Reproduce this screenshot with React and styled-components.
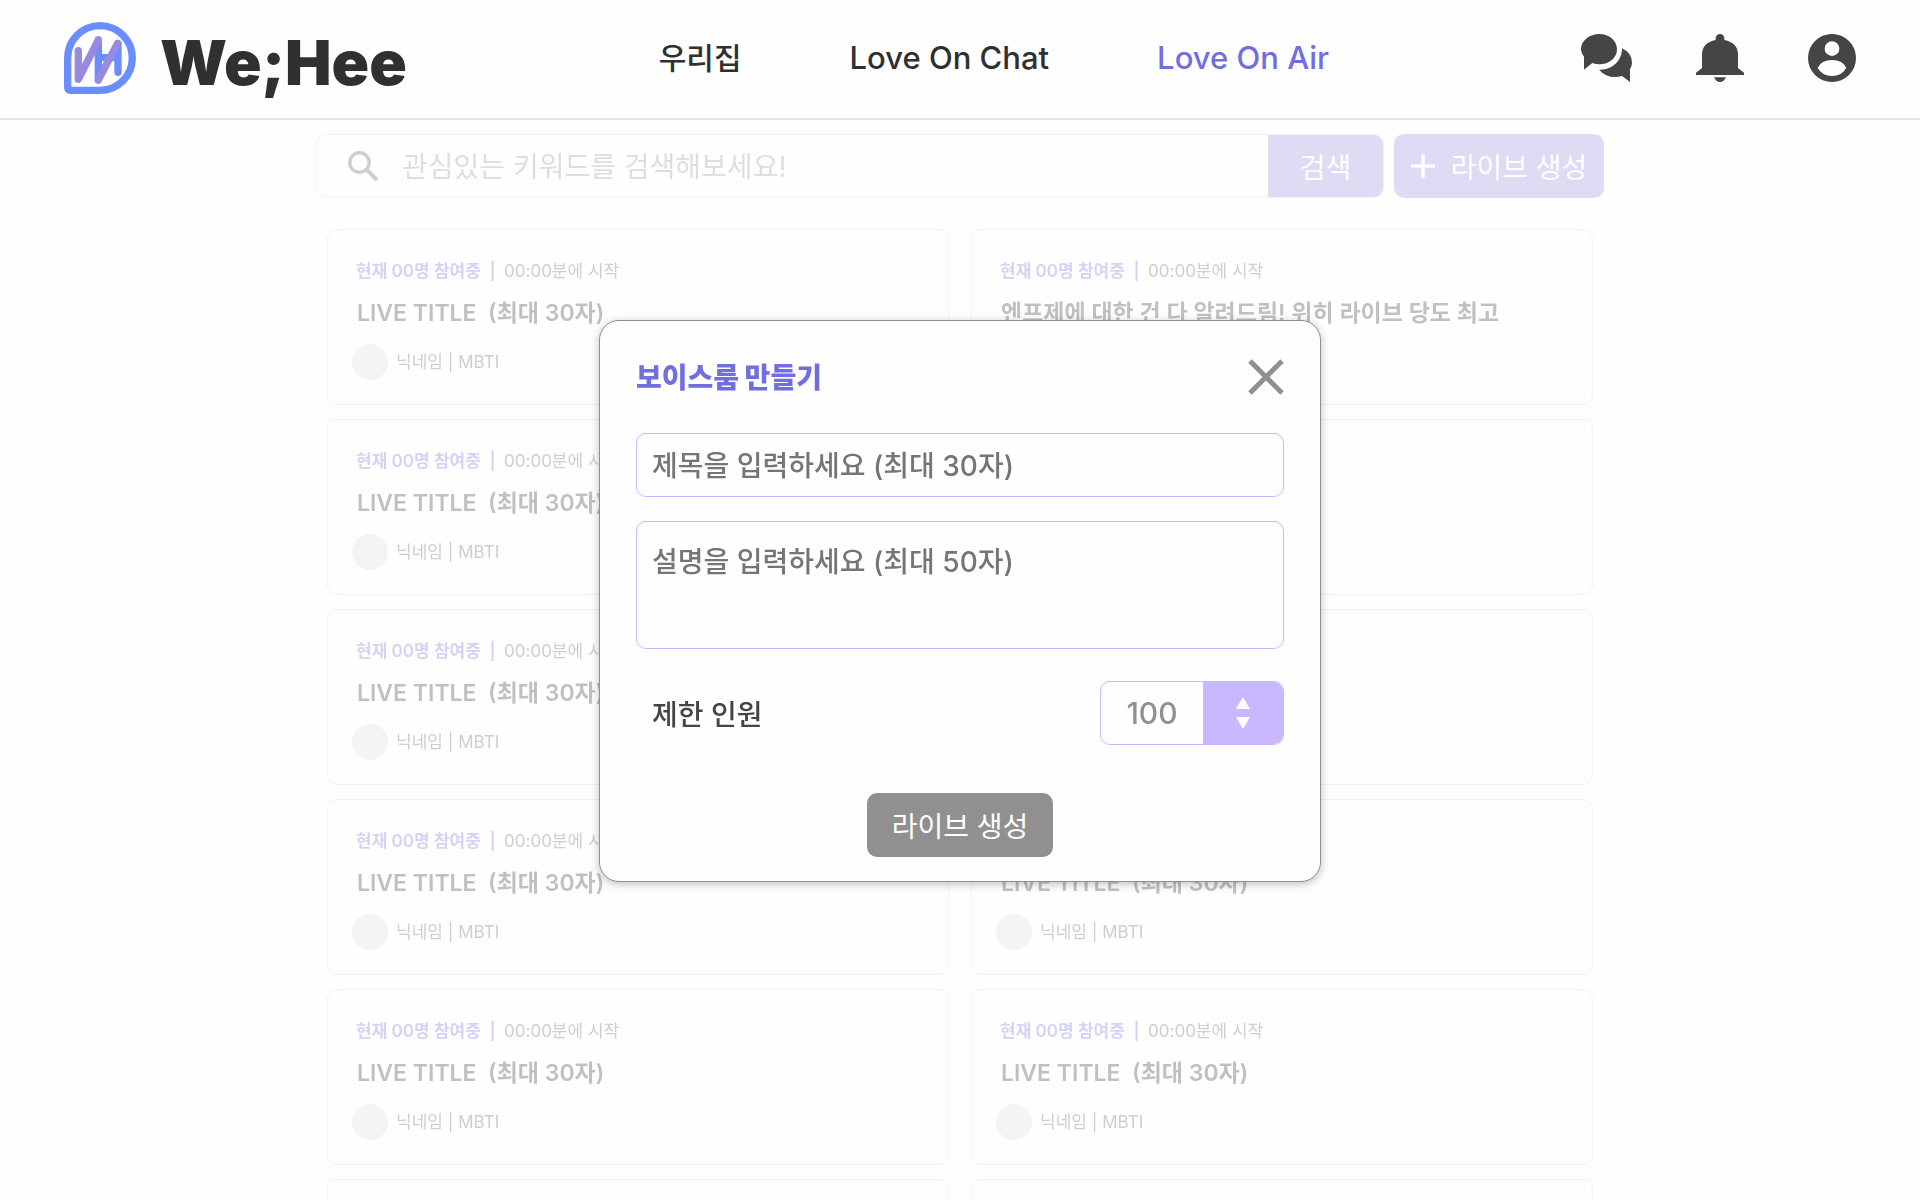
import React, { useState } from "react";
import styled, { createGlobalStyle, css } from "styled-components";

const color = {
  bg: "#fefefe",
  ink: "#303030",
  icon: "#454545",
  grey: "#909090",
  purple: "#716fdf",
  lilac: "#c9b8ff",
  violet: "#998ae0",
  line: "#e5e5e5",
};

const GlobalStyle = createGlobalStyle`
  *, *::before, *::after { box-sizing: border-box; }
  body {
    margin: 0;
    height: 100vh;
    overflow: hidden;
    background: ${color.bg};
    color: ${color.ink};
    font-family: Inter, "Noto Sans CJK KR", sans-serif;
  }
  button, input, textarea { font: inherit; color: inherit; margin: 0; }
  button { border: 0; padding: 0; background: none; cursor: pointer; }
  h1, h2, h3, p { margin: 0; }
`;

const Header = styled.header`
  display: flex;
  align-items: center;
  justify-content: space-between;
  height: 120px;
  padding: 0 64px 2px;
  border-bottom: 2px solid ${color.line};
`;

const Brand = styled.a`
  display: flex;
  align-items: center;
  gap: 24px;
  color: ${color.ink};
  font-size: 62px;
  font-weight: 900;
  line-height: 72px;
  text-decoration: none;
`;

const BrandName = styled.span`
  padding-top: 10px;
`;

const Nav = styled.nav`
  display: flex;
  gap: 108px;
`;

const NavLink = styled.a`
  color: ${(p) => (p.$active ? color.purple : color.ink)};
  font-size: 30px;
  font-weight: 500;
  line-height: 40px;
  text-decoration: none;
  &:lang(en) { font-size: 31px; }
`;

const Tools = styled.div`
  display: flex;
  gap: 64px;
`;

const IconButton = styled.button`
  display: flex;
  color: ${color.icon};
`;

const Main = styled.main`
  max-width: 1288px;
  margin: 0 auto;
  padding-top: 14px;
  opacity: 0.3;
`;

const SearchRow = styled.div`
  display: flex;
  gap: 10px;
  height: 64px;
  margin-bottom: 31px;
  font-size: 28px;
`;

const SearchForm = styled.form`
  display: flex;
  flex: 1;
  align-items: center;
  overflow: hidden;
  border: 1px solid #d5d5ea;
  border-radius: 10px;
`;

const SearchLabel = styled.label`
  display: flex;
  flex: 1;
  align-items: center;
  gap: 23px;
  padding-left: 30px;
  color: #606060;
`;

const SearchInput = styled.input`
  flex: 1;
  min-width: 0;
  padding: 2px 0 0;
  border: 0;
  outline: 0;
  background: none;
  &::placeholder { color: #959595; opacity: 1; }
`;

const SearchButton = styled.button`
  align-self: stretch;
  width: 115px;
  background: ${color.violet};
  color: #fff;
`;

const LiveButton = styled.button`
  display: flex;
  align-items: center;
  justify-content: center;
  gap: 16px;
  width: 210px;
  border-radius: 10px;
  background: ${color.violet};
  color: #fff;
`;

const Grid = styled.ul`
  display: grid;
  grid-template-columns: 1fr 1fr;
  gap: 14px 22px;
  margin: 0;
  padding: 0 11px;
  list-style: none;
`;

const Card = styled.li`
  display: flex;
  flex-direction: column;
  height: 176px;
  padding: 28px 24px;
  border: 1px solid #d5d5ea;
  border-radius: 10px;
`;

const Meta = styled.p`
  padding-left: 4px;
  color: #606060;
  font-size: 17px;
  line-height: 26px;
  white-space: pre;
`;

const Count = styled.span`
  color: ${color.purple};
  font-weight: 600;
`;

const CardTitle = styled.h3`
  margin: 13px 0 15px;
  padding-left: 5px;
  font-size: 23px;
  font-weight: 600;
  line-height: 32px;
  white-space: pre;
`;

const Host = styled.div`
  display: flex;
  align-items: center;
  gap: 8px;
  color: #606060;
  font-size: 17px;
  line-height: 26px;
`;

const Avatar = styled.span`
  width: 36px;
  height: 36px;
  border-radius: 50%;
  background: #dddddd;
`;

const Overlay = styled.div`
  position: fixed;
  inset: 0;
  display: flex;
  align-items: flex-start;
  justify-content: center;
  padding-top: 320px;
`;

const Dialog = styled.form`
  display: flex;
  flex-direction: column;
  width: 722px;
  max-width: 100%;
  padding: 38px 36px 24px;
  border: 1px solid ${color.grey};
  border-radius: 20px;
  background: ${color.bg};
  box-shadow: 0 2px 8px rgba(0, 0, 0, 0.25);
  font-size: 28px;
  font-weight: 500;
`;

const DialogHead = styled.div`
  display: flex;
  align-items: center;
  justify-content: space-between;
  height: 36px;
  margin-bottom: 38px;
`;

const DialogTitle = styled.h2`
  padding-top: 2px;
  color: ${color.purple};
  font-size: 28px;
  font-weight: 900;
  line-height: 36px;
`;

const CloseButton = styled.button`
  display: flex;
  color: ${color.grey};
`;

const field = css`
  width: 100%;
  border: 1px solid ${color.lilac};
  border-radius: 10px;
  outline: 0;
  background: none;
  &::placeholder { color: #757575; opacity: 1; }
`;

const TitleInput = styled.input`
  ${field}
  height: 64px;
  margin-bottom: 24px;
  padding: 2px 15px 0;
`;

const DescInput = styled.textarea`
  ${field}
  height: 128px;
  padding: 20px 15px;
  line-height: 40px;
  resize: none;
`;

const LimitRow = styled.div`
  display: flex;
  align-items: center;
  justify-content: space-between;
  margin: 32px 0 48px;
  padding-left: 16px;
  color: ${color.icon};
`;

const Stepper = styled.div`
  display: flex;
  width: 184px;
  height: 64px;
  overflow: hidden;
  border: 1px solid ${color.lilac};
  border-radius: 10px;
`;

const LimitInput = styled.input`
  flex: 1;
  min-width: 0;
  padding: 0;
  border: 0;
  outline: 0;
  background: none;
  color: ${color.grey};
  font-size: 30px;
  text-align: center;
  appearance: textfield;
  &::-webkit-inner-spin-button { appearance: none; margin: 0; }
`;

const StepButtons = styled.div`
  display: flex;
  flex-direction: column;
  align-items: center;
  justify-content: center;
  gap: 8px;
  width: 80px;
  background: ${color.lilac};
`;

const StepButton = styled.button`
  display: flex;
  color: #fff;
`;

const SubmitButton = styled.button`
  align-self: center;
  width: 186px;
  height: 64px;
  border-radius: 10px;
  background: ${color.grey};
  color: #fff;
  font-weight: 400;
`;

const Logo = () => (
  <svg width="72" height="72" viewBox="0 0 216 216" fill="none" aria-hidden="true">
    <path
      d="M108 11A97 97 0 0 1 108 205H20Q11 205 11 196V108A97 97 0 0 1 108 11Z"
      stroke="#6b8dff"
      strokeWidth="22"
    />
    <g strokeWidth="22" strokeLinecap="round">
      <path d="M103 54V174M162 66V151M103 107H162" stroke="#6b8dff" />
      <path d="M43 86V172L103 54M103 174L161 64" stroke="#998ae0" strokeLinejoin="round" />
    </g>
  </svg>
);

const ChatIcon = () => (
  <svg width="51" height="48" viewBox="0 0 153 144" fill="currentColor" aria-hidden="true">
    <path d="M55 0C85 0 108 20 108 46S85 91 55 91Q44 91 34 87L9 107V68Q0 58 0 46C0 20 25 0 55 0Z" />
    <path d="M123 43Q153 57 153 86Q153 97 147 106V144L123 126Q82 138 54 107C94 109 123 80 123 43Z" />
  </svg>
);

const BellIcon = () => (
  <svg width="48" height="48" viewBox="0 0 144 144" fill="currentColor" aria-hidden="true">
    <path d="M59 13a13 13 0 0 1 26 0v5Q126 26 126 62V102L144 116V123H0V116L18 102V62Q18 26 59 18Z" />
    <path d="M54 130H90Q84 144 72 144T54 130Z" />
  </svg>
);

const UserIcon = () => (
  <svg width="48" height="48" viewBox="0 0 144 144" aria-hidden="true">
    <circle cx="72" cy="72" r="72" fill="currentColor" />
    <circle cx="72" cy="44" r="22" fill={color.bg} />
    <path d="M29 101Q40 78 72 78T115 101Q102 126 72 126T29 101Z" fill={color.bg} />
  </svg>
);

const SearchIcon = () => (
  <svg width="32" height="32" viewBox="0 0 32 32" fill="none" stroke="currentColor" aria-hidden="true">
    <circle cx="12.5" cy="12.5" r="9.7" strokeWidth="3.4" />
    <path d="M19.5 19.5L30 30" strokeWidth="4" />
  </svg>
);

const PlusIcon = () => (
  <svg width="24" height="24" viewBox="0 0 24 24" stroke="currentColor" strokeWidth="3.4" aria-hidden="true">
    <path d="M12 0V24M0 12H24" />
  </svg>
);

const CloseIcon = () => (
  <svg width="36" height="36" viewBox="0 0 36 36" stroke="currentColor" strokeWidth="5" aria-hidden="true">
    <path d="M2 2L34 34M34 2L2 34" />
  </svg>
);

const Triangle = ({ down }) => (
  <svg width="14" height="12" viewBox="0 0 14 12" fill="currentColor" aria-hidden="true">
    <path d={down ? "M0 0H14L7 12Z" : "M7 0L14 12H0Z"} />
  </svg>
);

const plain = "LIVE TITLE  (최대 30자)";
const rooms = Array.from({ length: 12 }, (_, i) => ({
  id: i,
  title: i === 1 ? "엔프제에 대한 건 다 알려드림! 위히 라이브 당도 최고" : plain,
}));

const RoomCard = ({ title }) => (
  <Card>
    <Meta>
      <Count>{"현재 00명 참여중  |  "}</Count>00:00분에 시작
    </Meta>
    <CardTitle>{title}</CardTitle>
    <Host>
      <Avatar />
      <span>닉네임 | MBTI</span>
    </Host>
  </Card>
);

function CreateRoomDialog({ onClose }) {
  const [limit, setLimit] = useState(100);
  return (
    <Overlay>
      <Dialog role="dialog" aria-labelledby="room-heading" onSubmit={(e) => e.preventDefault()}>
        <DialogHead>
          <DialogTitle id="room-heading">보이스룸 만들기</DialogTitle>
          <CloseButton type="button" aria-label="닫기" onClick={onClose}>
            <CloseIcon />
          </CloseButton>
        </DialogHead>
        <TitleInput aria-label="제목" maxLength={30} placeholder="제목을 입력하세요 (최대 30자)" />
        <DescInput aria-label="설명" maxLength={50} placeholder="설명을 입력하세요 (최대 50자)" />
        <LimitRow>
          <label htmlFor="limit">제한 인원</label>
          <Stepper>
            <LimitInput
              id="limit"
              type="number"
              value={limit}
              onChange={(e) => setLimit(Number(e.target.value))}
            />
            <StepButtons>
              <StepButton type="button" aria-label="늘리기" onClick={() => setLimit(limit + 1)}>
                <Triangle />
              </StepButton>
              <StepButton type="button" aria-label="줄이기" onClick={() => setLimit(limit - 1)}>
                <Triangle down />
              </StepButton>
            </StepButtons>
          </Stepper>
        </LimitRow>
        <SubmitButton>라이브 생성</SubmitButton>
      </Dialog>
    </Overlay>
  );
}

export default function App() {
  const [open, setOpen] = useState(true);
  return (
    <>
      <GlobalStyle />
      <Header>
        <Brand href="#home">
          <Logo />
          <BrandName>We;Hee</BrandName>
        </Brand>
        <Nav>
          <NavLink href="#house">우리집</NavLink>
          <NavLink href="#chat" lang="en">Love On Chat</NavLink>
          <NavLink href="#air" lang="en" $active>Love On Air</NavLink>
        </Nav>
        <Tools>
          <IconButton aria-label="채팅"><ChatIcon /></IconButton>
          <IconButton aria-label="알림"><BellIcon /></IconButton>
          <IconButton aria-label="내 정보"><UserIcon /></IconButton>
        </Tools>
      </Header>
      <Main>
        <SearchRow>
          <SearchForm onSubmit={(e) => e.preventDefault()}>
            <SearchLabel>
              <SearchIcon />
              <SearchInput aria-label="검색어" placeholder="관심있는 키워드를 검색해보세요!" />
            </SearchLabel>
            <SearchButton>검색</SearchButton>
          </SearchForm>
          <LiveButton type="button" onClick={() => setOpen(true)}>
            <PlusIcon />
            라이브 생성
          </LiveButton>
        </SearchRow>
        <Grid>
          {rooms.map((room) => (
            <RoomCard key={room.id} title={room.title} />
          ))}
        </Grid>
      </Main>
      {open && <CreateRoomDialog onClose={() => setOpen(false)} />}
    </>
  );
}
